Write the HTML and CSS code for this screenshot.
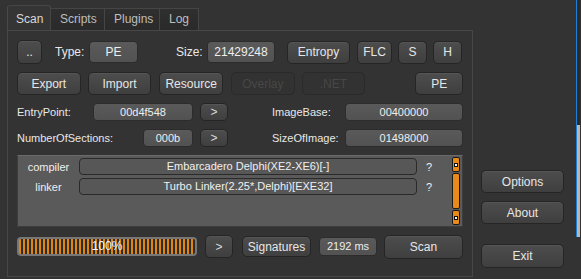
FILE: index.html
```html
<!DOCTYPE html>
<html lang="en">
<head>
  <meta charset="UTF-8" />
  <title>Detect It Easy</title>
  <link rel="stylesheet" href="styles.css">
</head>
<body>
  <div class="app">
    <div class="main">
      <div class="tabs">
        <div class="tab active">Scan</div>
        <div class="tab">Scripts</div>
        <div class="tab">Plugins</div>
        <div class="tab">Log</div>
      </div>
      <div class="panel">
        <div class="row r1">
          <button class="btn dots">..</button>
          <span class="lbl type-lbl">Type:</span>
          <div class="field type-f">PE</div>
          <span class="lbl size-lbl">Size:</span>
          <div class="field size-f">21429248</div>
          <button class="btn entropy">Entropy</button>
          <button class="btn flc">FLC</button>
          <button class="btn sq">S</button>
          <button class="btn sq">H</button>
        </div>
        <div class="row r2">
          <button class="btn wide">Export</button>
          <button class="btn wide">Import</button>
          <button class="btn wide">Resource</button>
          <button class="btn wide off">Overlay</button>
          <button class="btn wide off">.NET</button>
          <button class="btn pe">PE</button>
        </div>
        <div class="row r3">
          <span class="lbl left-lbl">EntryPoint:</span>
          <div class="field ep">00d4f548</div>
          <button class="btn go">&gt;</button>
          <span class="lbl right-lbl">ImageBase:</span>
          <div class="field hex">00400000</div>
        </div>
        <div class="row r3">
          <span class="lbl left-lbl">NumberOfSections:</span>
          <div class="field ns">000b</div>
          <button class="btn go">&gt;</button>
          <span class="lbl right-lbl">SizeOfImage:</span>
          <div class="field hex">01498000</div>
        </div>
        <div class="results">
          <div class="list">
            <div class="res-row">
              <span class="res-type">compiler</span>
              <div class="res-name">Embarcadero Delphi(XE2-XE6)[-]</div>
              <span class="res-q">?</span>
            </div>
            <div class="res-row">
              <span class="res-type">linker</span>
              <div class="res-name">Turbo Linker(2.25*,Delphi)[EXE32]</div>
              <span class="res-q">?</span>
            </div>
          </div>
          <div class="scroll">
            <div class="sb-btn"><i></i></div>
            <div class="sb-thumb"></div>
            <div class="sb-btn"><i></i></div>
          </div>
        </div>
        <div class="row r5">
          <div class="progress"><span>100%</span></div>
          <button class="btn go big">&gt;</button>
          <button class="btn sig">Signatures</button>
          <div class="field ms">2192 ms</div>
          <button class="btn scan">Scan</button>
        </div>
      </div>
    </div>
    <div class="side">
      <button class="btn sidebtn">Options</button>
      <button class="btn sidebtn">About</button>
      <button class="btn sidebtn exit">Exit</button>
    </div>
    <div class="edge"><div class="edge-patch"></div></div>
  </div>
</body>
</html>
```

FILE: styles.css
```css
body {
  margin: 0;
  background: #333333;
  font-family: "Liberation Sans", Arial, sans-serif;
  font-size: 12px;
  color: #e6e6e6;
  overflow: hidden;
}
.app {
  display: flex;
  width: 581px;
  height: 279px;
}
.main {
  padding: 5px 0 0 7px;
  width: 466px;
}
.tabs {
  display: flex;
  align-items: flex-end;
  height: 25px;
}
.tab {
  height: 21px;
  line-height: 21px;
  padding: 0 9px;
  border: 1px solid #454545;
  border-bottom: none;
  border-left: none;
  background: linear-gradient(#2f2f2f, #2a2a2a);
  color: #bdbdbd;
  font-size: 12px;
}
.tab.active {
  height: 24px;
  line-height: 26px;
  padding: 0 8px;
  border-left: 1px solid #4a4a4a;
  border-radius: 3px 3px 0 0;
  background: #353535;
  color: #d8d8d8;
  width: 26px;
}
.tab:nth-child(2) { width: 35px; }
.tab:nth-child(3) { width: 36px; }
.tab:nth-child(4) { width: 20px; }
.panel {
  border: 1px solid #474747;
  height: 227px;
  padding: 9px 9px 9px 9px;
  display: flex;
  flex-direction: column;
  gap: 8px;
}
.row {
  display: flex;
  align-items: center;
}
.btn {
  font-family: inherit;
  font-size: 12px;
  color: #e6e6e6;
  background: linear-gradient(#4d4d4d, #3f3f3f);
  border: 1px solid #252525;
  border-radius: 5px;
  padding: 0;
  height: 23px;
  box-shadow: inset 0 1px 0 #555555;
}
.btn.off {
  background: #323232;
  border-color: #2a2a2a;
  color: #474747;
  box-shadow: none;
}
.field {
  background: linear-gradient(#5a5a5a, #525252);
  border: 1px solid #2c2c2c;
  border-radius: 4px;
  text-align: center;
  color: #eeeeee;
  box-sizing: border-box;
}
.lbl {
  font-size: 11px;
  color: #e8e8e8;
}
.r1 { height: 24px; }
.dots { width: 25px; height: 24px; }
.type-lbl { margin-left: 13px; width: 34px; font-size: 12px; }
.type-f { width: 49px; height: 22px; line-height: 20px; font-size: 12px; }
.size-lbl { margin-left: 38px; width: 31px; font-size: 12px; }
.size-f { width: 68px; height: 22px; line-height: 20px; }
.entropy { margin-left: 12px; width: 63px; }
.flc { margin-left: 7px; width: 35px; }
.sq { margin-left: 6px; width: 29px; }
.r2 .btn.wide { width: 64px; margin-right: 7px; }
.r2 .btn.wide:nth-child(3) { margin-left: 1px; }
.r2 .btn.wide:nth-child(4) { margin-left: 1px; }
.pe { margin-left: 43px; width: 48px; }
.r3 { height: 18px; }
.left-lbl { width: 76px; }
.field.ep { width: 100px; height: 18px; line-height: 16px; font-size: 11px; }
.field.ns { width: 50px; height: 18px; line-height: 16px; font-size: 11px; margin-left: 50px; }
.go { width: 28px; height: 18px; margin-left: 7px; color: #dcdcdc; font-size: 12px; }
.right-lbl { margin-left: 44px; width: 73px; }
.field.hex { width: 118px; height: 18px; line-height: 16px; font-size: 11px; }
.results {
  height: 72px;
  box-sizing: border-box;
  width: 446px;
  background: #5a5a5a;
  border: 1px solid #3d3d3d;
  border-top-color: #6a6a6a;
  display: flex;
  padding: 1px 0 1px 0;
}
.list {
  flex: 1;
  padding-top: 1px;
  display: flex;
  flex-direction: column;
  gap: 3px;
}
.res-row {
  display: flex;
  align-items: center;
  height: 17px;
}
.res-type {
  width: 61px;
  text-align: center;
  font-size: 11px;
  color: #eeeeee;
}
.res-name {
  width: 338px;
  height: 17px;
  box-sizing: border-box;
  border: 1px solid #2a2a2a;
  border-radius: 4px;
  background: #575757;
  text-align: center;
  line-height: 15px;
  font-size: 11px;
  color: #f0f0f0;
}
.res-q {
  margin-left: 9px;
  font-size: 11px;
  color: #eeeeee;
}
.scroll {
  width: 8px;
  margin-right: 2px;
  display: flex;
  flex-direction: column;
  gap: 1px;
}
.sb-btn, .sb-thumb {
  box-sizing: border-box;
  background: #e88a1a;
  border: 1px solid #1a1a1a;
  border-radius: 2px;
  display: flex;
  justify-content: center;
  align-items: center;
}
.sb-btn { height: 15px; }
.sb-thumb { flex: 1; }
.sb-btn i {
  width: 2px;
  height: 2px;
  border: 1px solid #111111;
  background: #f4f4f4;
}
.r5 { height: 23px; }
.progress {
  width: 180px;
  height: 19px;
  box-sizing: border-box;
  border: 2px solid #777777;
  border-radius: 4px;
  background: repeating-linear-gradient(90deg, #e0860f 0 2.5px, #2c2c2c 2.5px 4px);
  text-align: center;
  line-height: 15px;
  font-size: 12px;
  color: #f4f4f4;
}
.go.big { height: 23px; margin-left: 8px; }
.sig { margin-left: 9px; width: 69px; height: 21px; }
.field.ms { margin-left: 8px; width: 58px; height: 19px; line-height: 17px; font-size: 11px; }
.scan { margin-left: 7px; width: 79px; height: 24px; }
.side {
  padding-top: 170px;
  padding-left: 8px;
  display: flex;
  flex-direction: column;
  gap: 8px;
}
.sidebtn { width: 83px; height: 23px; font-size: 12px; }
.sidebtn.exit { margin-top: 12px; height: 24px; }
.edge {
  margin-left: 12px;
  width: 4px;
  border-left: 1px solid #1d7fd6;
  height: 237px;
  background: #2a2a2a;
  padding-top: 125px;
  box-sizing: border-box;
}
.edge-patch {
  height: 112px;
  background: #b8b8b0;
}
```
